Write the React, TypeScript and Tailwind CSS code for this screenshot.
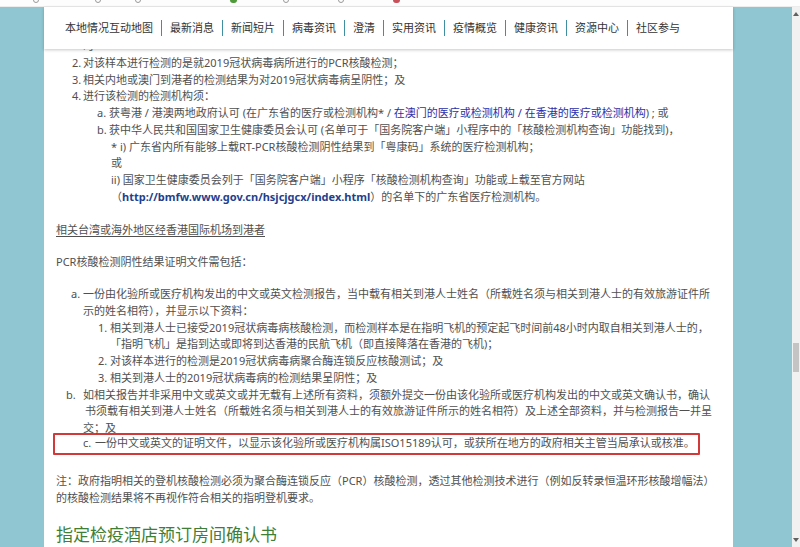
import React from 'react'

const navItems = ['本地情况互动地图', '最新消息', '新闻短片', '病毒资讯', '澄清', '实用资讯', '疫情概览', '健康资讯', '资源中心', '社区参与']

function Nav() {
  return (
    <div className="relative z-10 h-[42px] shrink-0 bg-white shadow-[0_1px_3px_rgba(0,0,0,0.22)] flex items-center pl-[21px] text-[11px] text-[#333]">
      {navItems.map((item, i) => (
        <div key={item} className="flex items-center">
          {i > 0 && <span className="mx-[8px] h-[16px] w-px bg-[#3f8fa0]" />}
          <span className="whitespace-nowrap">{item}</span>
        </div>
      ))}
    </div>
  )
}

function Scrollbar() {
  return (
    <div className="w-[8px] h-full bg-[#f1f1f1] flex flex-col items-center py-[3px]">
      <span className="w-0 h-0 border-x-[3px] border-x-transparent border-b-[4px] border-b-[#606060] mt-[2px]" />
      <span className="mt-[327px] w-[6px] h-[29px] bg-[#c4c4c4]" />
      <span className="flex-1" />
      <span className="w-0 h-0 border-x-[3px] border-x-transparent border-t-[4px] border-t-[#606060] mb-[2px]" />
    </div>
  )
}

export default function App() {
  return (
    <div className="relative w-[800px] h-[547px] overflow-hidden bg-white flex flex-col font-['Noto_Sans','Noto_Sans_CJK_SC',sans-serif]">
      {/* top strip with clipped browser icons */}
      <div className="h-[7px] shrink-0 bg-[#fdfdfd] border-b border-[#ececec] flex items-start">
        <span className="ml-[33px] -mt-[3px] w-[6px] h-[6px] rounded-full border border-[#9a9a9a]" />
        <span className="ml-[56px] -mt-[3px] w-[6px] h-[6px] rounded-full border border-[#9a9a9a]" />
        <span className="ml-[34px] -mt-[3px] w-[6px] h-[6px] rounded-full border border-[#9a9a9a]" />
        <span className="ml-[89px] -mt-[3px] w-[7px] h-[6px] rounded-full bg-[#4f9a3a]" />
        <span className="ml-[46px] -mt-[3px] w-[6px] h-[6px] rounded-full border border-[#9a9a9a]" />
        <span className="ml-[49px] -mt-[3px] w-[6px] h-[6px] rounded-full border border-[#9a9a9a]" />
        <span className="ml-[49px] -mt-[3px] w-[7px] h-[6px] rounded-full bg-[#c8505a]" />
      </div>

      <div className="flex flex-1 min-h-0">
        <div className="w-[44px] bg-[#8fc6d1]" />

        <div className="w-[689px] bg-white flex flex-col min-h-0">
          <Nav />

          <div className="-mt-[11px] px-[12px] text-[11px] leading-[16.75px] text-[#505050] whitespace-nowrap">
            {/* first list (continued) */}
            <div className="pl-[27px]">时</div>
            <div className="flex pl-[16px]"><span className="w-[11px] shrink-0">2.</span><span>对该样本进行检测的是就2019冠状病毒病所进行的PCR核酸检测；</span></div>
            <div className="flex pl-[16px]"><span className="w-[11px] shrink-0">3.</span><span>相关内地或澳门到港者的检测结果为对2019冠状病毒病呈阴性；及</span></div>
            <div className="flex pl-[16px]"><span className="w-[11px] shrink-0">4.</span><span>进行该检测的检测机构须：</span></div>
            <div className="flex pl-[41px]">
              <span className="w-[12px] shrink-0">a.</span>
              <span>
                获粤港 / 港澳两地政府认可 (在广东省的医疗或检测机构* / <span className="text-[#2b2fa8]">在澳门的医疗或检测机构 / 在香港的医疗或检测机构</span>) ; 或
              </span>
            </div>
            <div className="flex pl-[41px]">
              <span className="w-[12px] shrink-0">b.</span>
              <span>获中华人民共和国国家卫生健康委员会认可 (名单可于「国务院客户端」小程序中的「核酸检测机构查询」功能找到)，</span>
            </div>
            <div className="pl-[55px]">* i) 广东省内所有能够上载RT-PCR核酸检测阴性结果到「粤康码」系统的医疗检测机构；</div>
            <div className="pl-[55px]">或</div>
            <div className="pl-[55px]">ii) 国家卫生健康委员会列于「国务院客户端」小程序「核酸检测机构查询」功能或上载至官方网站</div>
            <div className="pl-[55px]">
              （<span className="font-bold text-[#1f3f8f]">http://bmfw.www.gov.cn/hsjcjgcx/index.html</span>）的名单下的广东省医疗检测机构。
            </div>

            <div className="mt-[16px] underline underline-offset-2">相关台湾或海外地区经香港国际机场到港者</div>
            <div className="mt-[16px]">PCR核酸检测阴性结果证明文件需包括：</div>

            {/* second list */}
            <div className="mt-[15px]">
              <div className="flex pl-[15px]">
                <span className="w-[12px] shrink-0">a.</span>
                <div>
                  <div>一份由化验所或医疗机构发出的中文或英文检测报告，当中载有相关到港人士姓名（所载姓名须与相关到港人士的有效旅游证件所</div>
                  <div>示的姓名相符），并显示以下资料：</div>
                </div>
              </div>
              <div className="flex pl-[42px]">
                <span className="w-[12px] shrink-0">1.</span>
                <div>
                  <div>相关到港人士已接受2019冠状病毒病核酸检测，而检测样本是在指明飞机的预定起飞时间前48小时内取自相关到港人士的，</div>
                  <div>「指明飞机」是指到达或即将到达香港的民航飞机（即直接降落在香港的飞机)；</div>
                </div>
              </div>
              <div className="flex pl-[42px]"><span className="w-[12px] shrink-0">2.</span><span>对该样本进行的检测是2019冠状病毒病聚合酶连锁反应核酸测试；及</span></div>
              <div className="flex pl-[42px]"><span className="w-[12px] shrink-0">3.</span><span>相关到港人士的2019冠状病毒病的检测结果呈阴性；及</span></div>
              <div className="flex pl-[10px]">
                <span className="w-[17px] shrink-0">b.</span>
                <div>
                  <div>如相关报告并非采用中文或英文或并无载有上述所有资料，须额外提交一份由该化验所或医疗机构发出的中文或英文确认书，确认</div>
                  <div className="pl-[2px]">书须载有相关到港人士姓名（所载姓名须与相关到港人士的有效旅游证件所示的姓名相符）及上述全部资料，并与检测报告一并呈</div>
                  <div>交；及</div>
                </div>
              </div>
            </div>

            <div className="-mt-[4px] -ml-[3px] w-[647px] h-[22px] border-2 border-[#d23a3a] rounded-[1px] flex items-center pl-[28px]">
              <span className="w-[12px] shrink-0">c.</span>
              <span>一份中文或英文的证明文件，以显示该化验所或医疗机构属ISO15189认可，或获所在地方的政府相关主管当局承认或核准。</span>
            </div>

            <div className="mt-[18px]">
              <div>注：政府指明相关的登机核酸检测必须为聚合酶连锁反应（PCR）核酸检测，透过其他检测技术进行（例如反转录恒温环形核酸增幅法）</div>
              <div>的核酸检测结果将不再视作符合相关的指明登机要求。</div>
            </div>

            <h2 className="mt-[17px] text-[17px] leading-[24px] text-[#3f7f35]">指定检疫酒店预订房间确认书</h2>
          </div>
        </div>

        <div className="w-[59px] bg-[#8fc6d1]" />
        <Scrollbar />
      </div>
    </div>
  )
}
